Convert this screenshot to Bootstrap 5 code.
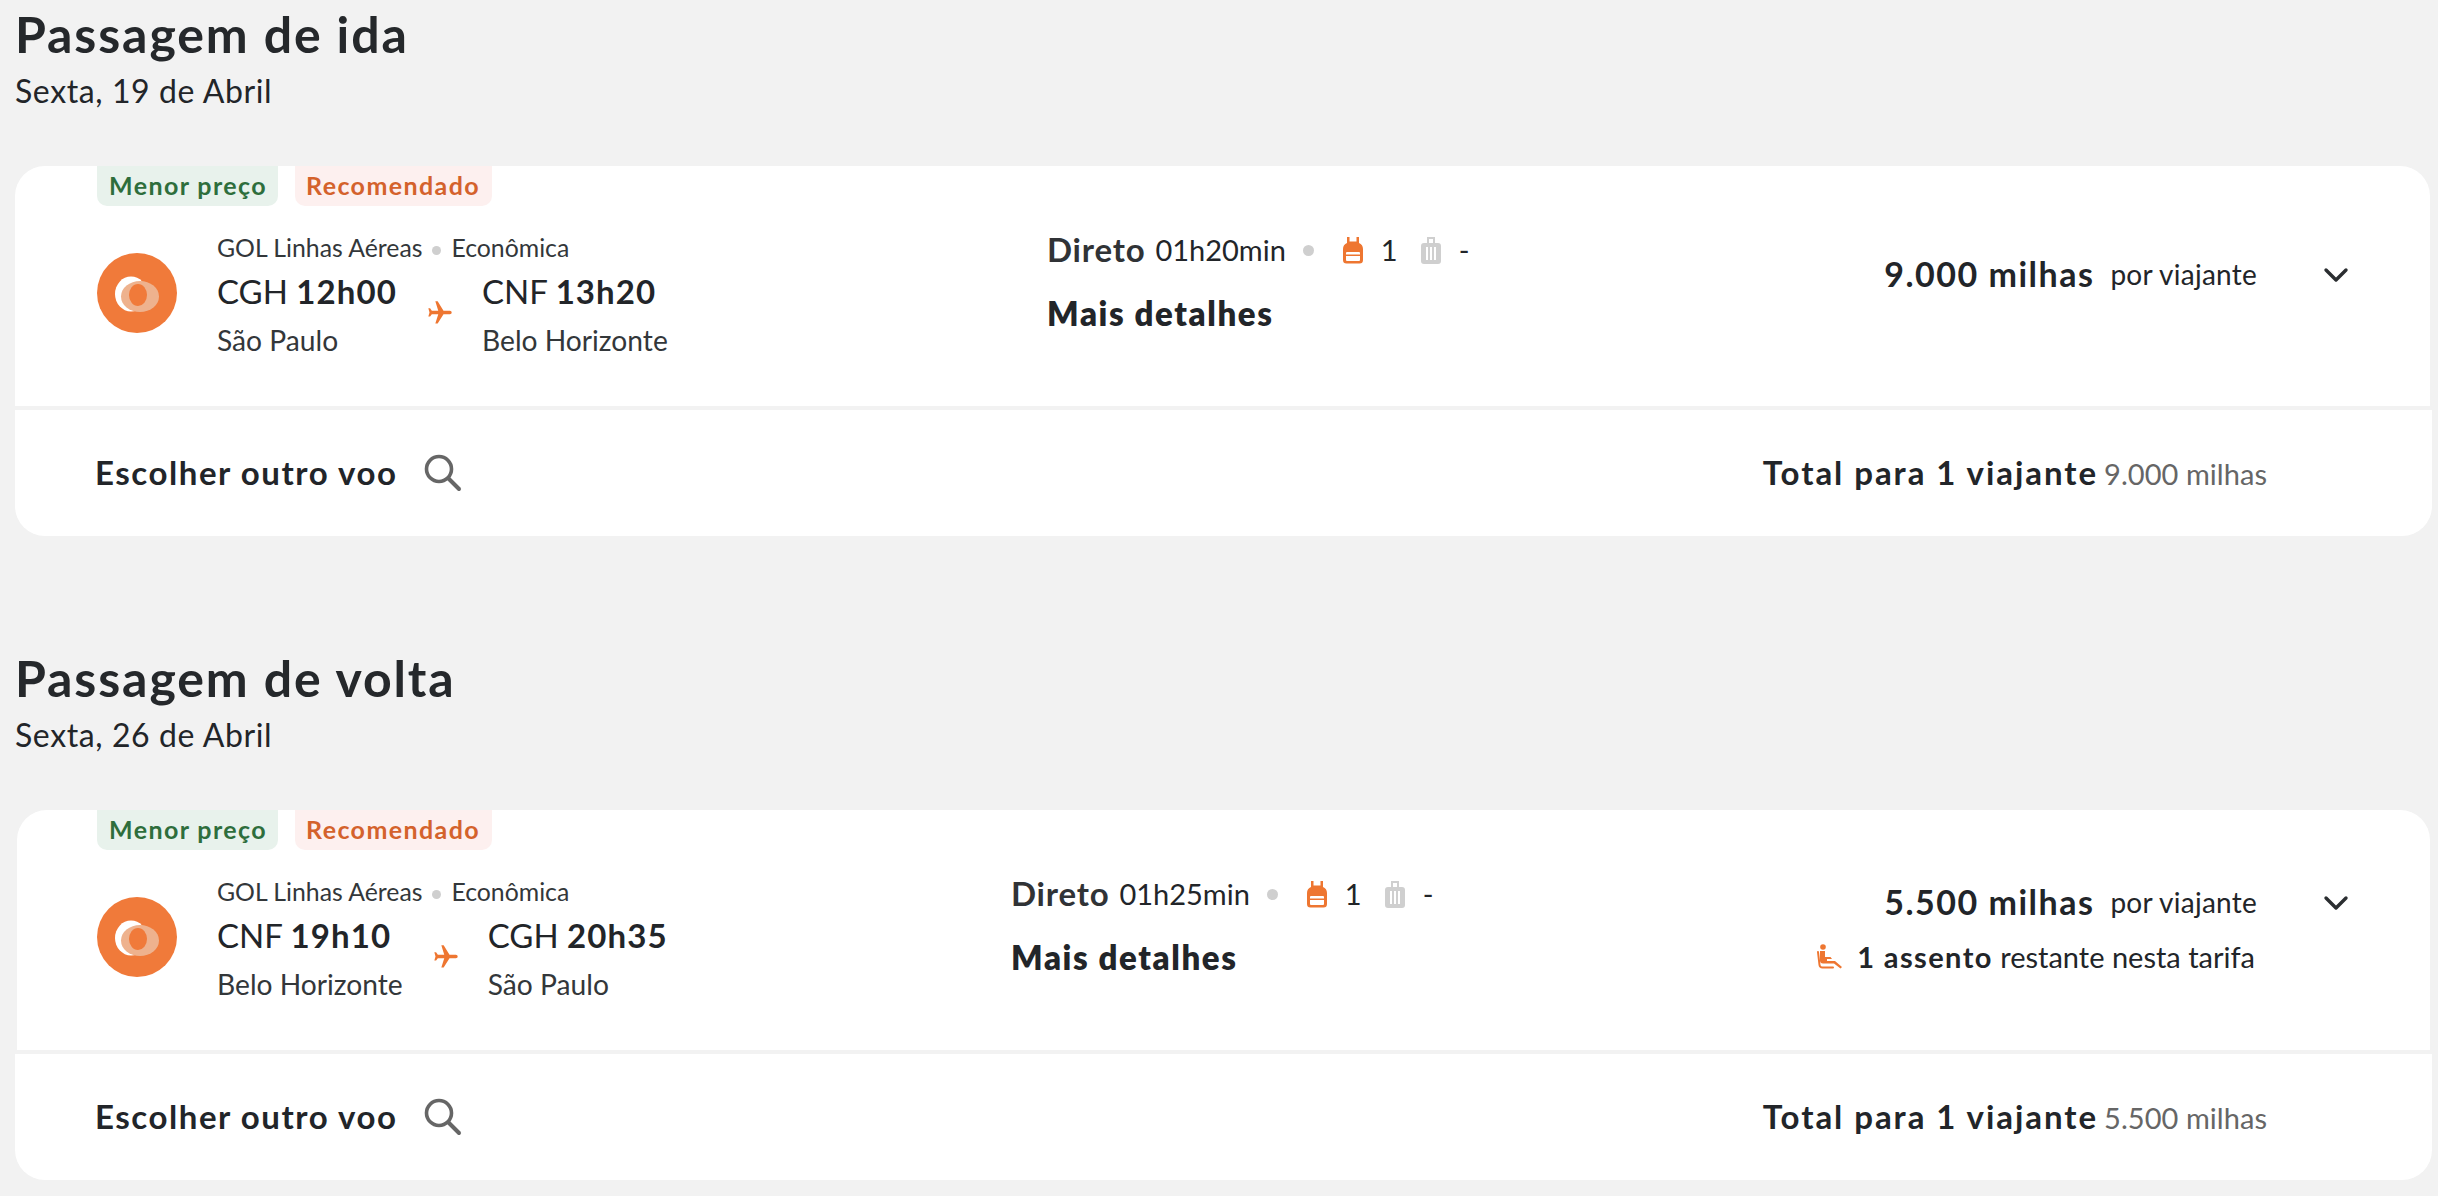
<!DOCTYPE html>
<html lang="pt-BR">
<head>
<meta charset="utf-8">
<title>Passagens</title>
<link rel="stylesheet" href="https://cdn.jsdelivr.net/npm/bootstrap@5.3.0/dist/css/bootstrap.min.css">
<style>
html,body{background:#f2f2f2;}
body{font-family:"Lato","Noto Sans",sans-serif;color:#222529;}
.trip-sec{margin-left:15px;width:2415px;padding-top:5px;margin-bottom:108px;}
.trip-sec:last-of-type{margin-bottom:0;}
.trip-title{font-size:50px;line-height:58px;font-weight:700;margin:0;letter-spacing:1.900px;color:#25282b;}
.trip-date{font-size:32px;line-height:38px;margin:9px 0 0;letter-spacing:.6px;}
.fare-box{margin-top:56px;}
.fare-top{background:#fff;height:240px;border-radius:30px 30px 0 0;padding:0 0 0 82px;}
.fare-top-inset{margin-left:2px;padding-left:80px;}
.fare-bottom{background:#fff;height:126px;margin:4px -2px 0 0;border-radius:0 0 30px 30px;padding:0 165px 0 80px;}
.tag-item{height:40px;border-radius:0 0 10px 10px;padding:0 12px;font-size:25px;line-height:38px;font-weight:700;letter-spacing:1.400px;white-space:nowrap;}
.tag-green{background:#e8f2ec;color:#2e6e3c;width:181px;}
.tag-red{background:#fdf0ef;color:#d4622c;width:197px;padding-left:11px;}
.tag-row{gap:17px;height:40px;}
.logo-wrap{width:80px;margin-top:47px;}
.route-col{margin-left:40px;margin-top:27px;}
.carrier-line{font-size:24.800px;line-height:30px;color:#33373a;}
.mini-dot{display:inline-block;width:9px;height:9px;border-radius:50%;background:#cfcfcf;margin:0 10px;vertical-align:2px;}
.leg-code{font-size:33px;line-height:44px;margin-top:6px;white-space:nowrap;}
.leg-code b{font-weight:700;letter-spacing:1.100px;}
.leg-city{font-size:28.200px;line-height:36px;margin-top:9px;white-space:nowrap;color:#33373a;}
.plane-cell{width:28px;margin:0 28px 0 29px;padding-top:4px;}
.info-a{width:950px;}
.info-b{width:914px;}
.middle-col{margin-top:64px;}
.direct-line{height:40px;}
.direct-word{font-size:33px;font-weight:700;letter-spacing:.8px;color:#303336;}
.direct-time{font-size:29px;margin-left:10px;letter-spacing:0;}
.big-dot{width:11px;height:11px;border-radius:50%;background:#cfcfcf;margin:0 29px 0 17px;}
.bag-count{font-size:29px;margin:0 23px 0 18px;}
.bag-none{font-size:29px;margin-left:18px;}
.more-link{font-size:33px;font-weight:800;line-height:44px;margin-top:21px;letter-spacing:1.600px;color:#222529;}
.right-col{position:absolute;top:0;right:81px;width:620px;}
.right-col-holder{position:relative;}
.price-line{height:50px;margin-top:82px;}
.price-tight{margin-top:66px;}
.price-num{font-size:34px;font-weight:700;letter-spacing:1.500px;}
.price-per{font-size:28px;margin:2px 0 0 16px;letter-spacing:.25px;}
.chevron-ico{margin:4px 0 0 66px;width:26px;}
.seat-line{margin:13px 94px 0 0;font-size:29px;line-height:36px;white-space:nowrap;}
.seat-line b{font-weight:700;letter-spacing:1.400px;}
.seat-ico{margin-right:14px;}
.other-flight{font-size:33px;font-weight:700;letter-spacing:1.550px;}
.search-ico{margin-left:27px;}
.total-label{font-size:33px;font-weight:700;letter-spacing:1.950px;}
.total-val{font-size:29px;color:#666;margin-left:6px;letter-spacing:.05px;}
</style>
</head>
<body>

<section class="trip-sec">
  <h2 class="trip-title">Passagem de ida</h2>
  <p class="trip-date">Sexta, 19 de Abril</p>
  <div class="fare-box">
    <div class="fare-top d-flex right-col-holder">
      <div class="info-a flex-shrink-0">
        <div class="d-flex tag-row"><span class="tag-item tag-green">Menor preço</span><span class="tag-item tag-red">Recomendado</span></div>
        <div class="d-flex">
          <div class="logo-wrap"><svg width="80" height="80" viewBox="0 0 80 80"><circle cx="40" cy="40" r="40" fill="#f07a3a"/><ellipse cx="34" cy="41" rx="16" ry="17.5" fill="#fff"/><ellipse cx="43" cy="43.5" rx="19" ry="15.5" fill="#eeb28e"/><ellipse cx="41" cy="42" rx="9" ry="11" fill="#f07a3a"/></svg></div>
          <div class="route-col">
            <div class="carrier-line">GOL Linhas Aéreas<span class="mini-dot"></span>Econômica</div>
            <div class="d-flex">
              <div><div class="leg-code">CGH <b>12h00</b></div><div class="leg-city">São Paulo</div></div>
              <div class="plane-cell d-flex align-items-center"><svg width="28" height="28" viewBox="0 0 24 24"><path fill="#ee7631" transform="rotate(90 12 12)" d="M21 16v-2l-8-5V3.5c0-.83-.67-1.500-1.500-1.500S10 2.670 10 3.500V9l-8 5v2l8-2.500V19l-2 1.500V22l3.500-1 3.500 1v-1.500L13 19v-5.500l8 2.500z"/></svg></div>
              <div><div class="leg-code">CNF <b>13h20</b></div><div class="leg-city">Belo Horizonte</div></div>
            </div>
          </div>
        </div>
      </div>
      <div class="middle-col">
        <div class="d-flex align-items-center direct-line">
          <span class="direct-word">Direto</span><span class="direct-time">01h20min</span><span class="big-dot"></span>
          <svg width="20" height="27" viewBox="0 0 20 27"><path fill="#ee7631" d="M4 0h2.500v4.500h7V0H16v6c2.500 1 4 3 4 6v11a3.500 3.500 0 0 1-3.500 3.500h-13A3.500 3.500 0 0 1 0 23V12c0-3 1.500-5 4-6z"/><rect x="3" y="15" width="14" height="9" rx="1" fill="#fff"/><rect x="3" y="17.500" width="14" height="1.500" fill="#ee7631"/></svg>
          <span class="bag-count">1</span>
          <svg width="20" height="27" viewBox="0 0 20 27"><path fill="#cfcfcf" fill-rule="evenodd" d="M6 0h8v6h3a3 3 0 0 1 3 3v15a3 3 0 0 1-3 3H3a3 3 0 0 1-3-3V9a3 3 0 0 1 3-3h3zM8 2v4h4V2zM5 10v13h2V10zM9 10v13h2V10zM13 10v13h2V10z"/></svg>
          <span class="bag-none">-</span>
        </div>
        <div class="more-link">Mais detalhes</div>
      </div>
      <div class="right-col d-flex flex-column align-items-end">
        <div class="price-line d-flex align-items-center"><span class="price-num">9.000 milhas</span><span class="price-per">por viajante</span>
          <svg class="chevron-ico" width="26" height="16" viewBox="0 0 26 16"><path d="M3 3l10 10L23 3" fill="none" stroke="#2b2e31" stroke-width="3.400" stroke-linecap="round" stroke-linejoin="round"/></svg></div>
      </div>
    </div>
    <div class="fare-bottom d-flex align-items-center justify-content-between">
      <div class="d-flex align-items-center"><span class="other-flight">Escolher outro voo</span>
        <svg class="search-ico" width="38" height="38" viewBox="0 0 38 38"><circle cx="15" cy="15" r="12.500" fill="none" stroke="#666" stroke-width="3.600"/><path d="M24.500 24.500L35 35" stroke="#666" stroke-width="4" stroke-linecap="round"/></svg></div>
      <div class="d-flex align-items-baseline"><span class="total-label">Total para 1 viajante</span><span class="total-val">9.000 milhas</span></div>
    </div>
  </div>
</section>

<section class="trip-sec">
  <h2 class="trip-title">Passagem de volta</h2>
  <p class="trip-date">Sexta, 26 de Abril</p>
  <div class="fare-box">
    <div class="fare-top fare-top-inset d-flex right-col-holder">
      <div class="info-b flex-shrink-0">
        <div class="d-flex tag-row"><span class="tag-item tag-green">Menor preço</span><span class="tag-item tag-red">Recomendado</span></div>
        <div class="d-flex">
          <div class="logo-wrap"><svg width="80" height="80" viewBox="0 0 80 80"><circle cx="40" cy="40" r="40" fill="#f07a3a"/><ellipse cx="34" cy="41" rx="16" ry="17.5" fill="#fff"/><ellipse cx="43" cy="43.5" rx="19" ry="15.5" fill="#eeb28e"/><ellipse cx="41" cy="42" rx="9" ry="11" fill="#f07a3a"/></svg></div>
          <div class="route-col">
            <div class="carrier-line">GOL Linhas Aéreas<span class="mini-dot"></span>Econômica</div>
            <div class="d-flex">
              <div><div class="leg-code">CNF <b>19h10</b></div><div class="leg-city">Belo Horizonte</div></div>
              <div class="plane-cell d-flex align-items-center"><svg width="28" height="28" viewBox="0 0 24 24"><path fill="#ee7631" transform="rotate(90 12 12)" d="M21 16v-2l-8-5V3.5c0-.83-.67-1.500-1.500-1.500S10 2.670 10 3.500V9l-8 5v2l8-2.500V19l-2 1.500V22l3.500-1 3.500 1v-1.500L13 19v-5.500l8 2.500z"/></svg></div>
              <div><div class="leg-code">CGH <b>20h35</b></div><div class="leg-city">São Paulo</div></div>
            </div>
          </div>
        </div>
      </div>
      <div class="middle-col">
        <div class="d-flex align-items-center direct-line">
          <span class="direct-word">Direto</span><span class="direct-time">01h25min</span><span class="big-dot"></span>
          <svg width="20" height="27" viewBox="0 0 20 27"><path fill="#ee7631" d="M4 0h2.500v4.500h7V0H16v6c2.500 1 4 3 4 6v11a3.500 3.500 0 0 1-3.500 3.500h-13A3.500 3.500 0 0 1 0 23V12c0-3 1.500-5 4-6z"/><rect x="3" y="15" width="14" height="9" rx="1" fill="#fff"/><rect x="3" y="17.500" width="14" height="1.500" fill="#ee7631"/></svg>
          <span class="bag-count">1</span>
          <svg width="20" height="27" viewBox="0 0 20 27"><path fill="#cfcfcf" fill-rule="evenodd" d="M6 0h8v6h3a3 3 0 0 1 3 3v15a3 3 0 0 1-3 3H3a3 3 0 0 1-3-3V9a3 3 0 0 1 3-3h3zM8 2v4h4V2zM5 10v13h2V10zM9 10v13h2V10zM13 10v13h2V10z"/></svg>
          <span class="bag-none">-</span>
        </div>
        <div class="more-link">Mais detalhes</div>
      </div>
      <div class="right-col d-flex flex-column align-items-end">
        <div class="price-line price-tight d-flex align-items-center"><span class="price-num">5.500 milhas</span><span class="price-per">por viajante</span>
          <svg class="chevron-ico" width="26" height="16" viewBox="0 0 26 16"><path d="M3 3l10 10L23 3" fill="none" stroke="#2b2e31" stroke-width="3.400" stroke-linecap="round" stroke-linejoin="round"/></svg></div>
        <div class="seat-line d-flex align-items-center">
          <svg class="seat-ico" width="26" height="27" viewBox="0 0 26 27"><circle cx="6" cy="3" r="2.800" fill="#ee7631"/><path fill="#ee7631" d="M3 7h5v6h5.500l1.500 2H10v2h8l7 6-1.500 1.500L17 19.500H6c-2 0-3-1-3-3z"/><path fill="none" stroke="#ee7631" stroke-width="2" stroke-linecap="round" d="M1 8l1.500 13c.2 1.500 1 2.500 3 2.500H16"/></svg>
          <span><b>1 assento</b> restante nesta tarifa</span>
        </div>
      </div>
    </div>
    <div class="fare-bottom d-flex align-items-center justify-content-between">
      <div class="d-flex align-items-center"><span class="other-flight">Escolher outro voo</span>
        <svg class="search-ico" width="38" height="38" viewBox="0 0 38 38"><circle cx="15" cy="15" r="12.500" fill="none" stroke="#666" stroke-width="3.600"/><path d="M24.500 24.500L35 35" stroke="#666" stroke-width="4" stroke-linecap="round"/></svg></div>
      <div class="d-flex align-items-baseline"><span class="total-label">Total para 1 viajante</span><span class="total-val">5.500 milhas</span></div>
    </div>
  </div>
</section>

<script src="https://cdn.jsdelivr.net/npm/bootstrap@5.3.0/dist/js/bootstrap.bundle.min.js"></script>
</body>
</html>
